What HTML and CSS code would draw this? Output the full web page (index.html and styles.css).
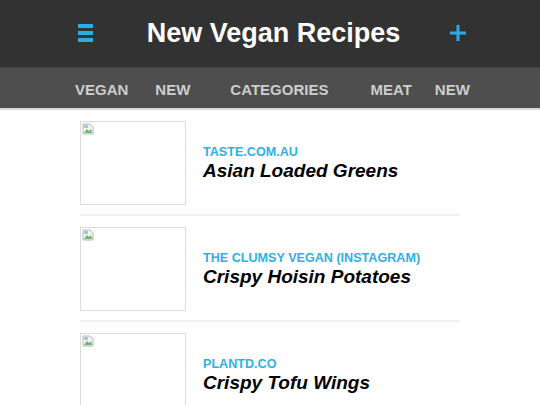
FILE: index.html
```html
<!DOCTYPE html>
<html>
<head>
<meta charset="utf-8">
<link rel="stylesheet" href="styles.css">
</head>
<body>
<header class="topbar">
  <span class="menu-icon"><i></i><i></i><i></i></span>
  <h1 class="title">New Vegan Recipes</h1>
  <svg class="plus-icon" width="16" height="16" viewBox="0 0 16 16"><rect x="6.5" y="0" width="3" height="16" fill="#29aee4"/><rect x="0" y="6.5" width="16" height="3" fill="#29aee4"/></svg>
</header>
<nav class="tabs">
  <span class="tab t1">VEGAN</span>
  <span class="tab t2">NEW</span>
  <span class="tab t3">CATEGORIES</span>
  <span class="tab t4">MEAT</span>
  <span class="tab t5">NEW</span>
</nav>
<main class="list">
  <div class="row">
    <div class="thumb"><svg class="broken" width="12" height="12" viewBox="0 0 12 12"><path d="M1 1h7l3 3v7H1z" fill="#f4f4f4" stroke="#b8b8b8" stroke-width="1"/><path d="M2 10l3-4 2 2 2-2 1 4z" fill="#6cb86c"/><rect x="2" y="2" width="4" height="3" fill="#9fc7e6"/></svg></div>
    <div class="info"><div class="source">TASTE.COM.AU</div><div class="name">Asian Loaded Greens</div></div>
  </div>
  <div class="row">
    <div class="thumb"><svg class="broken" width="12" height="12" viewBox="0 0 12 12"><path d="M1 1h7l3 3v7H1z" fill="#f4f4f4" stroke="#b8b8b8" stroke-width="1"/><path d="M2 10l3-4 2 2 2-2 1 4z" fill="#6cb86c"/><rect x="2" y="2" width="4" height="3" fill="#9fc7e6"/></svg></div>
    <div class="info"><div class="source">THE CLUMSY VEGAN (INSTAGRAM)</div><div class="name">Crispy Hoisin Potatoes</div></div>
  </div>
  <div class="row">
    <div class="thumb"><svg class="broken" width="12" height="12" viewBox="0 0 12 12"><path d="M1 1h7l3 3v7H1z" fill="#f4f4f4" stroke="#b8b8b8" stroke-width="1"/><path d="M2 10l3-4 2 2 2-2 1 4z" fill="#6cb86c"/><rect x="2" y="2" width="4" height="3" fill="#9fc7e6"/></svg></div>
    <div class="info"><div class="source">PLANTD.CO</div><div class="name">Crispy Tofu Wings</div></div>
  </div>
</main>
</body>
</html>
```
FILE: styles.css
```css
* { box-sizing: border-box; }
html, body { margin: 0; padding: 0; background: #fff; overflow: hidden; }
body { font-family: "Liberation Sans", Arial, sans-serif; width: 540px; height: 405px; }
.topbar {
  height: 67px;
  background: #323232;
  display: flex;
  align-items: center;
  padding: 0 74px 0 78px;
  justify-content: space-between;
}
.menu-icon { display: flex; flex-direction: column; gap: 3px; width: 15px; margin-top: -1px; }
.menu-icon i { display: block; height: 4px; background: #29aee4; }
.title { margin: 0 0 0 4px; color: #fff; font-size: 27px; font-weight: bold; letter-spacing: 0; }
.plus-icon { display: block; margin-top: -1px; }
.tabs {
  height: 43px;
  background: #4e4e4e;
  border-top: 1px solid #444;
  border-bottom: 2px solid #d8d8d8;
  display: flex;
  align-items: center;
  padding-left: 75px;
  padding-top: 2px;
}
.tab { color: #cdcdcd; font-weight: bold; font-size: 15px; }
.t2 { margin-left: 27px; }
.t3 { margin-left: 40px; }
.t4 { margin-left: 42px; }
.t5 { margin-left: 23px; }
.list { width: 380px; margin: 0 auto; }
.row {
  display: flex;
  align-items: center;
  padding: 11px 0 9px;
  border-bottom: 2px solid #efefef;
}
.thumb {
  position: relative;
  width: 106px;
  height: 84px;
  border: 1px solid #dcdcdc;
  flex: none;
}
.broken { position: absolute; left: 1px; top: 1px; }
.info { margin-left: 17px; margin-top: 1px; }
.source { color: #2fb0e3; font-weight: bold; font-size: 12.6px; line-height: 15px; }
.name { color: #000; font-weight: bold; font-style: italic; font-size: 19px; line-height: 22px; }
```
